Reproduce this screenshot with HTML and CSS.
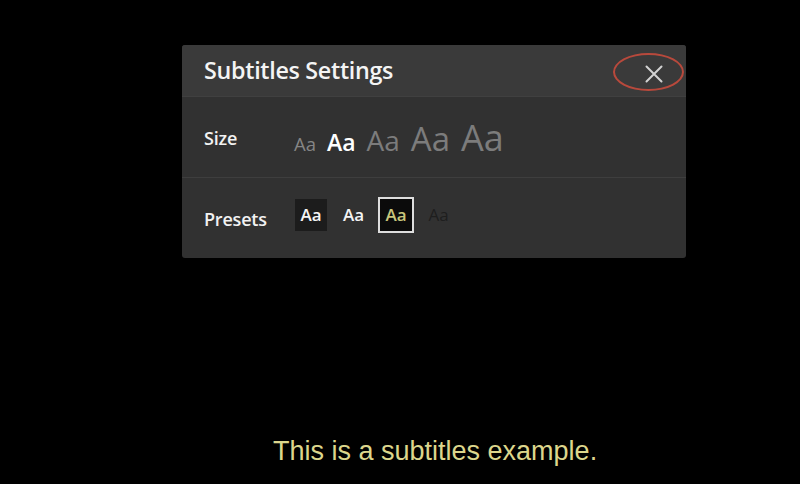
FILE: index.html
```html
<!DOCTYPE html>
<html>
<head>
<meta charset="utf-8">
<link rel="stylesheet" href="styles.css">
</head>
<body>
<div class="panel">
  <div class="header">
    <div class="title">Subtitles Settings</div>
    <div class="close">
      <svg width="18" height="18" viewBox="0 0 18 18"><path d="M1.5 1.5 L16.5 16.5 M16.5 1.5 L1.5 16.5" stroke="#d2d2d2" stroke-width="2" fill="none" stroke-linecap="round"/></svg>
      <span class="ring"></span>
    </div>
  </div>
  <div class="row size-row">
    <div class="label">Size</div>
    <div class="sizes">
      <span class="s s1">Aa</span>
      <span class="s s2">Aa</span>
      <span class="s s3">Aa</span>
      <span class="s s4">Aa</span>
      <span class="s s5">Aa</span>
    </div>
  </div>
  <div class="row preset-row">
    <div class="label">Presets</div>
    <div class="presets">
      <span class="p p1">Aa</span>
      <span class="p p2">Aa</span>
      <span class="p p3">Aa</span>
      <span class="p p4">Aa</span>
    </div>
  </div>
</div>
<div class="subtitle">This is a subtitles example.</div>
</body>
</html>
```
FILE: styles.css
```css
html, body {
  margin: 0;
  padding: 0;
  background: #000;
  width: 800px;
  height: 484px;
  overflow: hidden;
}
body {
  font-family: "Open Sans", "DejaVu Sans", sans-serif;
}
.panel {
  margin: 45px 0 0 182px;
  width: 504px;
  height: 213px;
  background: #313131;
  border-radius: 3px;
}
.header {
  height: 51px;
  background: #3a3a3a;
  border-radius: 3px 3px 0 0;
  display: flex;
  align-items: center;
  justify-content: space-between;
  padding: 0 23px 0 22px;
  border-bottom: 1px solid #404040;
}
.title {
  color: #f4f4f4;
  font-size: 23.3px;
  font-weight: 600;
  letter-spacing: -0.3px;
  margin-top: -2px;
}
.close {
  position: relative;
  width: 18px;
  height: 18px;
  margin-top: 6px;
}
.close svg { display: block; }
.ring {
  position: absolute;
  left: -32px;
  top: -12px;
  width: 67px;
  height: 34px;
  border: 2px solid #b8493c;
  border-radius: 50%;
}
.row {
  display: flex;
  align-items: center;
  padding-left: 22px;
}
.size-row {
  height: 80px;
  border-bottom: 1px solid #3e3e3e;
}
.preset-row {
  height: 80px;
}
.label {
  width: 90px;
  color: #f2f2f2;
  font-size: 18px;
  font-weight: 600;
  letter-spacing: -0.2px;
  flex: none;
}
.size-row .label { margin-top: 2px; }
.preset-row .label { margin-top: 2px; }
.sizes {
  display: flex;
  align-items: baseline;
  gap: 11px;
  margin-top: 2px;
}
.s {
  color: #7c7c7c;
  line-height: 1;
}
.s1 { font-size: 18.5px; color: #858585; }
.s2 { font-size: 23px; color: #ffffff; font-weight: 600; }
.s3 { font-size: 28px; }
.s4 { font-size: 33px; }
.s5 { font-size: 36px; }
.presets {
  display: flex;
  align-items: center;
  gap: 10.5px;
  margin-top: -7px;
  margin-left: 1px;
}
.p {
  width: 32px;
  height: 32px;
  display: flex;
  align-items: center;
  justify-content: center;
  font-size: 17px;
  font-weight: 600;
  box-sizing: border-box;
}
.p1 { background: #1c1c1c; color: #f4f4f4; }
.p2 { color: #f4f4f4; }
.p3 {
  background: #0b0b0b;
  color: #c8c67c;
  outline: 2px solid #dedede;
}
.p4 { color: #1e1e1e; font-weight: 400; }
.subtitle {
  margin: 178px 0 0 273px;
  font-family: "Liberation Sans", Arial, sans-serif;
  font-size: 27px;
  line-height: 31px;
  color: #dcd68c;
  text-shadow: 0 0 2px #000, 1px 1px 1px #000;
  white-space: nowrap;
}
```
